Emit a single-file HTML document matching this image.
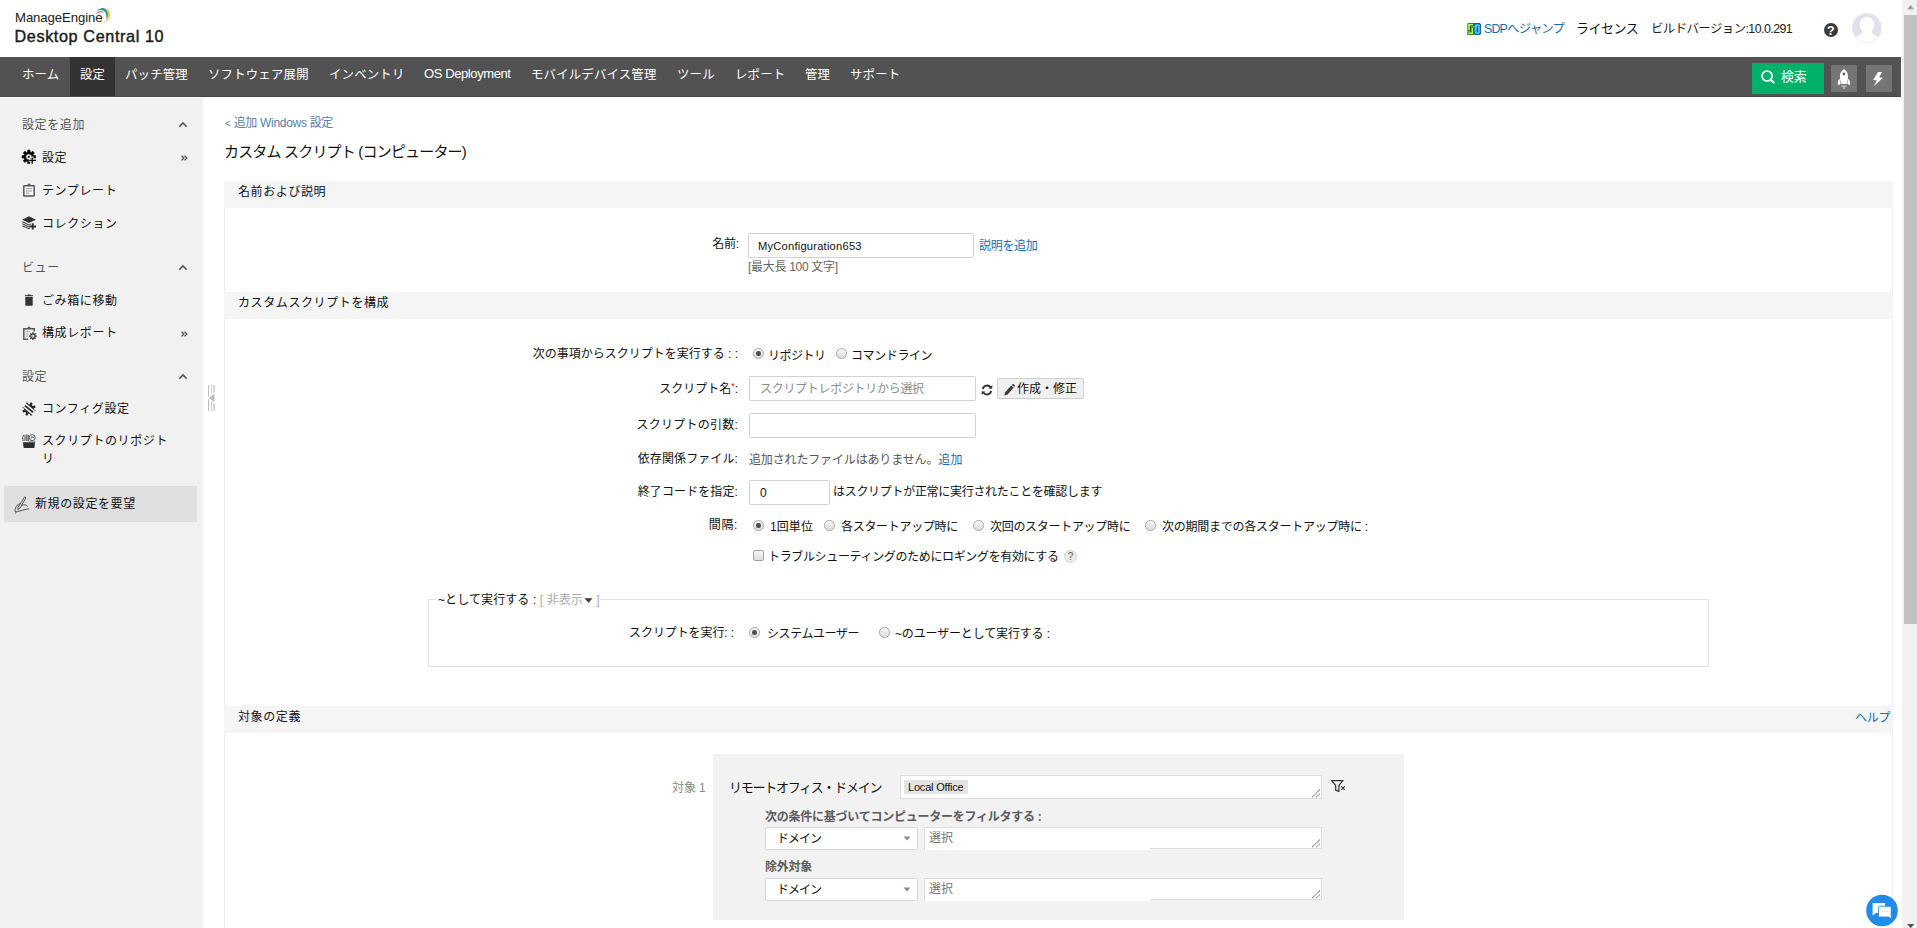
<!DOCTYPE html>
<html lang="ja">
<head>
<meta charset="utf-8">
<title>Desktop Central 10</title>
<style>
*{box-sizing:border-box;margin:0;padding:0}
html,body{width:1917px;height:928px;overflow:hidden;background:#fff}
body{position:relative;font-family:"Liberation Sans","Noto Sans CJK JP",sans-serif;font-size:12px;letter-spacing:0.6px;color:#111;line-height:20px}
.a{position:absolute;white-space:nowrap}
.t{position:absolute;white-space:nowrap;line-height:20px;height:20px}
.r{text-align:right}
.blue{color:#1a6cb0}
.gray{color:#666}
svg{position:absolute;display:block;overflow:visible}
/* header */
#nav{left:0;top:57px;width:1901px;height:40px;background:#525252;border-bottom:1px solid #454545}
#nav .act{left:70px;top:0;width:45px;height:39px;background:#333}
#nav .t{color:#fff;top:8px;font-size:12.4px;letter-spacing:0.2px}
/* sidebar */
#side{left:0;top:98px;width:203px;height:830px;background:#f1f1f1}
.sh{color:#555}
.bar{left:224px;width:1669px;height:27px;background:#f5f5f5}
.inp{position:absolute;background:#fff;border:1px solid #d2d2d2;border-radius:1.5px}
.inp.ta{border-color:#dcdcdc;border-radius:0}
.radio{position:absolute;width:10.4px;height:10.4px;margin:0.3px 0 0 0.3px;border-radius:50%;border:1px solid #a8a8a8;background:linear-gradient(#f6f6f6,#dcdcdc)}
.radio.on::after{content:"";position:absolute;left:2px;top:2px;width:4.4px;height:4.4px;border-radius:50%;background:#505050}
</style>
</head>
<body>
<!--HEADER-->
<div class="a" id="logo1" style="left:15px;top:8px;font-size:13.2px;line-height:20px;color:#222;letter-spacing:-0.1px">ManageEngine</div>
<svg style="left:94px;top:6px" width="18" height="18" viewBox="0 0 18 18">
  <path d="M9.8 2 C14.5 2.5 17 7 15.6 11 C14.6 14 12 16 9.2 16.7 C12 15 13.6 12.6 13.9 10 C14.3 6.5 12.6 3.6 9.8 2Z" fill="#f7c91d"/>
  <path d="M6.5 2.2 C10 1.4 13 3.6 13.7 7 C14.1 9.6 13.5 11.8 12.4 13.2 C12.8 10 12.2 6 9.6 4 C8.6 3.1 7.6 2.6 6.5 2.2Z" fill="#1f7ed0"/>
  <path d="M2.6 4.8 C5 2.4 8.6 2.2 11 4.4 C12 5.4 12.4 6.4 12.6 7.6 C11 5 8.6 3.8 6 4 C4.6 4.1 3.6 4.4 2.6 4.8Z" fill="#1eab5a"/>
  <path d="M1.4 8.2 C3 5.6 6 4.6 8.6 5.4 C9.4 5.7 10 6.1 10.4 6.6 C7.6 5.8 4.4 6.2 1.4 8.2Z" fill="#e8305a"/>
</svg>
<div class="a" id="logo2" style="left:14.5px;top:24px;font-size:16.2px;line-height:24px;color:#1a1a1a;-webkit-text-stroke:0.4px #1a1a1a;letter-spacing:0.62px">Desktop Central 10</div>

<svg id="ic-sdp" style="left:1467px;top:23px" width="14" height="12" viewBox="0 0 14 12">
  <path d="M1.2 0 H7.2 V12 H0.4 V0.8Z" fill="#2f5d06"/>
  <path d="M7 0 H12.8 L14 1.2 V10.8 L12.8 12 H8.2 L7 10.8Z" fill="#0f5f8f"/>
  <path d="M6.2 1.7 H2 V7.2 M5.3 5 V10.4 H1.1" fill="none" stroke="#9aff62" stroke-width="1.7"/>
  <rect x="8.7" y="1.9" width="3.5" height="8" rx="1.5" fill="#1d628d" stroke="#3fc1ff" stroke-width="2"/>
  <path d="M4 3.9 H10.4 M0.2 8.7 H3" stroke="#b9c9b5" stroke-width="0.8"/>
</svg>
<div class="t blue" style="left:1484px;top:19px;font-size:12.4px;letter-spacing:-0.8px">SDPへジャンプ</div>
<div class="t" style="left:1576px;top:19px;font-size:13px;letter-spacing:-0.5px">ライセンス</div>
<div class="t" style="left:1651px;top:19px;font-size:12.4px;letter-spacing:-0.55px;color:#222">ビルドバージョン:10.0.291</div>
<div class="a" style="left:1823.5px;top:23px;width:14.4px;height:14.4px;border-radius:50%;background:#3a3a3a;letter-spacing:0;color:#fff;font-weight:bold;font-size:13px;line-height:15px;text-align:center">?</div>
<svg id="ic-av" style="left:1852px;top:13px" width="30" height="30" viewBox="0 0 30 30">
  <defs><clipPath id="avc"><circle cx="14.9" cy="14.9" r="14.3"/></clipPath></defs>
  <circle cx="14.9" cy="14.9" r="14.6" fill="#dde2ed" stroke="#ececec" stroke-width="0.7"/>
  <g clip-path="url(#avc)" fill="#fff">
    <ellipse cx="14.9" cy="11.5" rx="7.2" ry="7.9"/>
    <path d="M9.8 17 V19.2 C9.8 21.6 5.4 22 3 25.2 L2 31 H28 L26.8 25.2 C24.4 22 20.1 21.6 20.1 19.2 V17Z"/>
  </g>
</svg>

<!--NAV-->
<div class="a" id="nav">
  <div class="a act"></div>
  <span class="t" style="left:22px">ホーム</span>
  <span class="t" style="left:80px">設定</span>
  <span class="t" style="left:125px">パッチ管理</span>
  <span class="t" style="left:208px">ソフトウェア展開</span>
  <span class="t" style="left:329px">インベントリ</span>
  <span class="t" style="left:424px;letter-spacing:-0.4px;font-size:13px;top:7px">OS Deployment</span>
  <span class="t" style="left:531px">モバイルデバイス管理</span>
  <span class="t" style="left:677px">ツール</span>
  <span class="t" style="left:735px">レポート</span>
  <span class="t" style="left:805px">管理</span>
  <span class="t" style="left:850px">サポート</span>
  <div class="a" style="left:1752px;top:6px;width:72px;height:31px;background:#00b16a"></div>
  <svg style="left:1760px;top:12px" width="16" height="16" viewBox="0 0 16 16"><circle cx="7.1" cy="7" r="5" fill="none" stroke="#fff" stroke-width="1.7"/><path d="M10.7 10.7 L13.6 13.6" stroke="#fff" stroke-width="2.1" stroke-linecap="round"/></svg>
  <span class="t" style="left:1781px;top:10px;font-size:12.8px;letter-spacing:0">検索</span>
  <div class="a" style="left:1831px;top:8px;width:26px;height:27px;background:#757575"></div>
  <div class="a" style="left:1866px;top:8px;width:26px;height:27px;background:#757575"></div>
  <svg id="ic-rocket" style="left:1831px;top:8px" width="26" height="27" viewBox="1831 65 26 27">
    <path d="M1843.95 69 C1846.6 70.6 1848.2 73.6 1848 77 C1847.9 80 1847.2 82.4 1846.4 84.1 H1841.5 C1840.7 82.4 1840 80 1839.9 77 C1839.7 73.6 1841.3 70.6 1843.95 69Z" fill="#fff"/>
    <path d="M1839.6 78.8 C1838.2 80 1837.6 82 1837.8 84.6 Q1837.9 85.3 1838.6 85 L1840.8 83.8 C1840.2 82.2 1839.8 80.6 1839.6 78.8Z M1848.3 78.8 C1849.7 80 1850.3 82 1850.1 84.6 Q1850 85.3 1849.3 85 L1847.1 83.8 C1847.7 82.2 1848.1 80.6 1848.3 78.8Z" fill="#fff"/>
    <circle cx="1843.95" cy="73.9" r="1.3" fill="#5a5a5a"/>
    <path d="M1841.2 86.1 H1846.7 M1843.95 86.4 V89.1" stroke="#c8c8c8" stroke-width="1.4" fill="none"/>
  </svg>
  <svg id="ic-bolt" style="left:1866px;top:8px" width="26" height="27" viewBox="1866 65 26 27">
    <path d="M1878 72.1 L1882.1 71.9 L1879.2 77.3 L1882.8 77.9 L1873.4 86.6 L1876.9 80.5 L1873.2 79.9Z" fill="#fff"/>
  </svg>
</div>

<!--SIDE-->
<div class="a" id="side"></div>
<div class="t sh" style="left:22px;top:115px">設定を追加</div>
<div class="t sh" style="left:22px;top:258px">ビュー</div>
<div class="t sh" style="left:22px;top:367px">設定</div>
<svg class="chev" style="left:178px;top:121px" width="10" height="7" viewBox="0 0 10 7"><path d="M1.3 5.8 L5 2 L8.7 5.8" fill="none" stroke="#555" stroke-width="1.6"/></svg>
<svg class="chev" style="left:178px;top:264px" width="10" height="7" viewBox="0 0 10 7"><path d="M1.3 5.8 L5 2 L8.7 5.8" fill="none" stroke="#555" stroke-width="1.6"/></svg>
<svg class="chev" style="left:178px;top:373px" width="10" height="7" viewBox="0 0 10 7"><path d="M1.3 5.8 L5 2 L8.7 5.8" fill="none" stroke="#555" stroke-width="1.6"/></svg>
<div class="t" style="left:42px;top:148px">設定</div>
<div class="t" style="left:42px;top:181px">テンプレート</div>
<div class="t" style="left:42px;top:214px">コレクション</div>
<div class="t" style="left:42px;top:291px">ごみ箱に移動</div>
<div class="t" style="left:42px;top:323px">構成レポート</div>
<div class="t" style="left:42px;top:399px">コンフィグ設定</div>
<div class="t" style="left:42px;top:432px;line-height:18px;height:36px;white-space:normal;width:130px">スクリプトのリポジトリ</div>
<svg style="left:181px;top:155px" width="7" height="6" viewBox="0 0 7 6"><path d="M0.6 0.6 L2.8 3 L0.6 5.4 M3.6 0.6 L5.8 3 L3.6 5.4" fill="none" stroke="#555" stroke-width="1.4"/></svg>
<svg style="left:181px;top:331px" width="7" height="6" viewBox="0 0 7 6"><path d="M0.6 0.6 L2.8 3 L0.6 5.4 M3.6 0.6 L5.8 3 L3.6 5.4" fill="none" stroke="#555" stroke-width="1.4"/></svg>
<div class="a" style="left:4px;top:486px;width:193px;height:36px;background:#e0e0e0"></div>
<div class="t" style="left:35px;top:494px">新規の設定を要望</div>
<!-- icons -->
<svg id="ic-gear" style="left:22px;top:150px" width="14" height="14" viewBox="0 0 14 14">
  <path d="M5.49 1.87 L5.56 0.01 L8.04 0.01 L8.11 1.87 L9.36 2.39 L10.72 1.12 L12.48 2.88 L11.21 4.24 L11.73 5.49 L13.59 5.56 L13.59 8.04 L11.73 8.11 L11.21 9.36 L12.48 10.72 L10.72 12.48 L9.36 11.21 L8.11 11.73 L8.04 13.59 L5.56 13.59 L5.49 11.73 L4.24 11.21 L2.88 12.48 L1.12 10.72 L2.39 9.36 L1.87 8.11 L0.01 8.04 L0.01 5.56 L1.87 5.49 L2.39 4.24 L1.12 2.88 L2.88 1.12 L4.24 2.39Z M6.8 3.9 A2.9 2.9 0 1 0 6.8 9.7 A2.9 2.9 0 1 0 6.8 3.9Z" fill="#0a0a0a" fill-rule="evenodd" stroke="#0a0a0a" stroke-width="0.5" stroke-linejoin="round"/>
  <circle cx="6.8" cy="6.8" r="1.1" fill="#0a0a0a"/>
  <path d="M10.2 6.6 V14.2 M6.8 10.3 H14.2" stroke="#f1f1f1" stroke-width="2.7"/>
  <path d="M10.2 7.4 V13.8 M7.2 10.3 H14" stroke="#0a0a0a" stroke-width="1.3"/>
</svg>
<svg id="ic-tpl" style="left:23px;top:183px" width="12" height="14" viewBox="0 0 12 14">
  <rect x="0.8" y="2.7" width="10.4" height="10.4" rx="0.6" fill="#fafafa" stroke="#555" stroke-width="1.5"/>
  <path d="M3.6 2.6 L6 0.2 L8.4 2.6Z" fill="#555"/>
  <path d="M2.8 5.6 H9 M2.8 8 H9 M2.8 10.2 H6.4" stroke="#8a8a8a" stroke-width="0.9"/>
</svg>
<svg id="ic-col" style="left:22px;top:216px" width="14" height="14" viewBox="0 0 14 14">
  <path d="M7 0.3 L13.8 3.7 L7 7 L0.2 3.7Z" fill="#333"/>
  <path d="M0.4 5.8 L7 9 L9.2 7.9 M0.4 7.8 L7 11 L8.2 10.4 M0.4 9.8 L7 12.8 L8 12.4" fill="none" stroke="#444" stroke-width="1.05"/>
  <path d="M10.8 7.2 V13.6 M7.6 10.4 H14" stroke="#333" stroke-width="2"/>
</svg>
<svg id="ic-trash" style="left:24px;top:294px" width="10" height="12" viewBox="0 0 10 12">
  <path d="M0.9 1.3 H3.2 L3.7 0.4 H6.3 L6.8 1.3 H9.1 V2.2 H0.9Z" fill="#333"/>
  <path d="M1.3 3 H8.7 V10.9 Q8.7 11.7 7.9 11.7 H2.1 Q1.3 11.7 1.3 10.9Z" fill="#333"/>
</svg>
<svg id="ic-rep" style="left:23px;top:326px" width="14" height="14" viewBox="0 0 14 14">
  <path d="M0.8 13.2 V2.7 H11.2 V5.6" fill="none" stroke="#555" stroke-width="1.5"/>
  <path d="M0.1 13.2 H5.2" stroke="#555" stroke-width="1.4"/>
  <path d="M3.6 2.6 L6 0.2 L8.4 2.6Z" fill="#555"/>
  <path d="M2.8 5.6 H7 M2.8 8 H5.4 M2.8 10.2 H5" stroke="#999" stroke-width="0.9"/>
  <path d="M9.19 7.50 L9.29 6.25 L10.51 6.25 L10.61 7.50 L11.24 7.75 L12.19 6.94 L13.06 7.81 L12.25 8.76 L12.50 9.39 L13.75 9.49 L13.75 10.71 L12.50 10.81 L12.25 11.44 L13.06 12.39 L12.19 13.26 L11.24 12.45 L10.61 12.70 L10.51 13.95 L9.29 13.95 L9.19 12.70 L8.56 12.45 L7.61 13.26 L6.74 12.39 L7.55 11.44 L7.30 10.81 L6.05 10.71 L6.05 9.49 L7.30 9.39 L7.55 8.76 L6.74 7.81 L7.61 6.94 L8.56 7.75Z M9.9 8.5 A1.6 1.6 0 1 0 9.9 11.7 A1.6 1.6 0 1 0 9.9 8.5Z" fill="#333" fill-rule="evenodd"/>
  <circle cx="9.9" cy="10.1" r="0.6" fill="#555"/>
</svg>
<svg id="ic-cfg" style="left:22px;top:402px" width="14" height="14" viewBox="0 0 14 14">
  <path d="M7.60 2.24 L8.61 0.29 L10.61 1.12 L9.94 3.21 L10.79 4.06 L12.88 3.39 L13.71 5.39 L11.76 6.40 L11.76 7.60 L13.71 8.61 L12.88 10.61 L10.79 9.94 L9.94 10.79 L10.61 12.88 L8.61 13.71 L7.60 11.76 L6.40 11.76 L5.39 13.71 L3.39 12.88 L4.06 10.79 L3.21 9.94 L1.12 10.61 L0.29 8.61 L2.24 7.60 L2.24 6.40 L0.29 5.39 L1.12 3.39 L3.21 4.06 L4.06 3.21 L3.39 1.12 L5.39 0.29 L6.40 2.24Z" fill="#2a2a2a"/>
  <path d="M1.2 2.2 L12.8 11.8" stroke="#f1f1f1" stroke-width="4.8"/>
  <path d="M2.9 3.6 L11.1 10.4" stroke="#2a2a2a" stroke-width="1.7"/>
</svg>
<svg id="ic-scr" style="left:22px;top:433px" width="14" height="15" viewBox="0 0 14 15">
  <path d="M1 9.2 H13 L12.5 14.2 Q12.4 14.9 11.7 14.9 H2.3 Q1.6 14.9 1.5 14.2Z" fill="#2e2e2e"/>
  <path d="M1.2 8.2 C0.4 6 0.6 3.4 1.6 2.2 M3 8 V1.8 M4.8 8 V1.4 M6.2 8.2 V1.8" stroke="#444" stroke-width="1" fill="none"/>
  <circle cx="10.2" cy="4.6" r="3" fill="#fafafa" stroke="#555" stroke-width="1"/>
  <path d="M8.6 5.6 L10.4 4.4 H12.2 M10.4 4.4 L9.6 3" stroke="#555" stroke-width="0.9" fill="none"/>
  <path d="M7 8.2 H13.4" stroke="#666" stroke-width="0.8"/>
</svg>
<svg id="ic-req" style="left:14px;top:496px" width="16" height="18" viewBox="0 0 16 18">
  <path d="M10.6 0.8 L12 1.8 L5.6 12.6 L3.8 13.6 L4 11.6Z" fill="none" stroke="#444" stroke-width="0.9"/>
  <path d="M1 15.6 C0.6 12 3 8.4 6.4 7.4 M1 15.6 C4 16.4 8 13.6 15.2 12.8 M7.6 9.6 C9.6 8.2 12.4 8.6 13.6 10.4 M2.4 16.6 L1 17.4" fill="none" stroke="#444" stroke-width="0.9"/>
</svg>
<!-- collapse handle -->
<div class="a" style="left:208px;top:385px;width:1px;height:26px;background:#bdbdbd"></div>
<div class="a" style="left:211px;top:385px;width:1px;height:26px;background:#cfcfcf"></div>
<div class="a" style="left:213px;top:385px;width:2px;height:26px;background:#d6d6d6"></div>
<svg style="left:207px;top:392px" width="9" height="12" viewBox="0 0 9 12"><path d="M8 0.4 L1 6 L8 11.6Z" fill="#bdbdbd" stroke="#fff" stroke-width="1.2"/></svg>
<!--MAIN-->
<div class="a" style="left:224px;top:207px;width:1px;height:721px;background:#ebebeb"></div>
<div class="a" style="left:1892px;top:208px;width:1px;height:720px;background:#ebebeb"></div>
<div class="t" style="left:225px;top:113px;color:#5a7ea8;font-size:12px;letter-spacing:-0.3px"><span style="font-size:10px;letter-spacing:0">&lt; </span>追加 Windows 設定</div>
<div class="t" style="left:224px;top:141px;font-size:15px;letter-spacing:-0.82px;color:#111;line-height:22px;height:22px">カスタム スクリプト (コンピューター)</div>

<div class="a bar" style="top:181px"></div>
<div class="t" style="left:238px;top:182px">名前および説明</div>
<div class="t r" style="left:600px;width:139px;top:234px;letter-spacing:-0.2px">名前:</div>
<div class="inp" style="left:748px;top:233px;width:226px;height:25px"></div>
<div class="t" style="left:758px;top:236px;font-size:11.2px;letter-spacing:0.2px">MyConfiguration653</div>
<div class="t blue" style="left:979px;top:236px;font-size:12px;letter-spacing:-0.3px">説明を追加</div>
<div class="t gray" style="left:748px;top:257px;font-size:12px;letter-spacing:-0.3px">[最大長 100 文字]</div>

<div class="a bar" style="top:292px"></div>
<div class="t" style="left:238px;top:293px">カスタムスクリプトを構成</div>

<div class="t r" style="left:500px;width:238px;top:344px;letter-spacing:0">次の事項からスクリプトを実行する : :</div>
<div class="radio on" style="left:753px;top:348px"></div>
<div class="t" style="left:768px;top:346px;letter-spacing:-0.5px">リポジトリ</div>
<div class="radio" style="left:836px;top:348px"></div>
<div class="t" style="left:851px;top:346px;letter-spacing:-0.4px">コマンドライン</div>

<div class="t r" style="left:500px;width:238px;top:379px;letter-spacing:0">スクリプト名<span style="color:#e00;font-size:9px;position:relative;top:-4px">*</span>:</div>
<div class="inp" style="left:749px;top:376px;width:227px;height:25px"></div>
<div class="t" style="left:760px;top:379px;color:#8c8c8c;letter-spacing:-0.3px">スクリプトレポジトリから選択</div>
<svg id="ic-refresh" style="left:980.5px;top:384px;transform:scaleX(-1)" width="12" height="12" viewBox="0 0 12 12">
  <path d="M10.2 5.2 A4.3 4.3 0 0 0 2.4 3.4" fill="none" stroke="#333" stroke-width="1.8"/>
  <path d="M1.8 6.8 A4.3 4.3 0 0 0 9.6 8.6" fill="none" stroke="#333" stroke-width="1.8"/>
  <path d="M0.6 1 L0.8 4.8 L4.4 4.4Z M11.4 11 L11.2 7.2 L7.6 7.6Z" fill="#333"/>
</svg>
<div class="a" style="left:997px;top:378px;width:87px;height:21px;background:#f0f0f0;border:1px solid #cfcfcf;border-radius:2px"></div>
<svg id="ic-pencil" style="left:1004px;top:384px" width="11" height="12" viewBox="0 0 11 12"><path d="M0.3 11.6 L1.2 8.2 L7.2 1.6 L9.6 3.8 L3.6 10.4Z" fill="#3a3a3a"/><path d="M7.9 0.9 L8.7 0.1 Q9.2 -0.2 9.7 0.2 L10.8 1.3 Q11.1 1.8 10.7 2.3 L10.2 3Z" fill="#3a3a3a"/></svg>
<div class="t" style="left:1017px;top:379px;letter-spacing:0">作成・修正</div>

<div class="t r" style="left:500px;width:238px;top:415px;letter-spacing:0.25px">スクリプトの引数:</div>
<div class="inp" style="left:749px;top:413px;width:227px;height:25px"></div>

<div class="t r" style="left:500px;width:238px;top:449px;letter-spacing:0.1px">依存関係ファイル:</div>
<div class="t" style="left:749px;top:450px;color:#555;letter-spacing:-0.15px">追加されたファイルはありません。<span class="blue" style="letter-spacing:0.3px">追加</span></div>

<div class="t r" style="left:500px;width:238px;top:482px;letter-spacing:0.1px">終了コードを指定:</div>
<div class="inp" style="left:749px;top:480px;width:81px;height:25px"></div>
<div class="t" style="left:760px;top:483px;font-size:12px">0</div>
<div class="t" style="left:833px;top:482px;letter-spacing:-0.3px">はスクリプトが正常に実行されたことを確認します</div>

<div class="t r" style="left:500px;width:238px;top:515px">間隔:</div>
<div class="radio on" style="left:753px;top:520px"></div>
<div class="t" style="left:770px;top:517px;letter-spacing:0.1px">1回単位</div>
<div class="radio" style="left:824px;top:520px"></div>
<div class="t" style="left:841px;top:517px;letter-spacing:-0.3px">各スタートアップ時に</div>
<div class="radio" style="left:973px;top:520px"></div>
<div class="t" style="left:990px;top:517px;letter-spacing:-0.3px">次回のスタートアップ時に</div>
<div class="radio" style="left:1145px;top:520px"></div>
<div class="t" style="left:1162px;top:517px;letter-spacing:-0.25px">次の期間までの各スタートアップ時に :</div>

<div class="a" style="left:753px;top:550px;width:10.5px;height:10.5px;border:1px solid #a2a2a2;background:linear-gradient(#f8f8f8,#dedede);border-radius:2px"></div>
<div class="t" style="left:768px;top:547px;letter-spacing:-0.35px">トラブルシューティングのためにロギングを有効にする</div>
<div class="a" style="left:1064px;top:550px;width:13px;height:13px;border-radius:50%;background:#ececec;border:1px solid #d4d4d4;color:#666;font-size:10px;line-height:11px;text-align:center;letter-spacing:0">?</div>

<div class="a" style="left:428px;top:599px;width:1281px;height:68px;border:1px solid #e2e2e2"></div>
<div class="a" style="left:436px;top:590px;width:164px;height:18px;background:#fff"></div>
<div class="t" style="left:438px;top:590px;letter-spacing:0.1px">~として実行する : <span style="color:#aaa">[ 非表示<svg style="position:relative;display:inline-block;vertical-align:middle;margin:0 0 0 1px;top:0" width="9" height="5" viewBox="0 0 8 5"><path d="M0 0.3 H8 L4 4.8Z" fill="#4a2f2f"/></svg> ]</span></div>

<div class="t r" style="left:500px;width:234px;top:623px;letter-spacing:-0.1px">スクリプトを実行: :</div>
<div class="radio on" style="left:749px;top:627px"></div>
<div class="t" style="left:767px;top:624px;letter-spacing:-0.4px">システムユーザー</div>
<div class="radio" style="left:879px;top:627px"></div>
<div class="t" style="left:895px;top:624px;letter-spacing:-0.15px">~のユーザーとして実行する :</div>

<div class="a bar" style="top:706px"></div>
<div class="t" style="left:238px;top:707px">対象の定義</div>
<div class="t blue" style="left:1855px;top:708px;letter-spacing:-0.3px">ヘルプ</div>

<div class="a" style="left:713px;top:754px;width:691px;height:166px;background:#f2f2f2"></div>
<div class="t" style="left:672px;top:778px;color:#888;letter-spacing:-0.1px">対象 1</div>
<div class="t" style="left:729px;top:778px;font-size:13px;letter-spacing:-1.27px">リモートオフィス・ドメイン</div>
<div class="inp ta" style="left:900px;top:775px;width:422px;height:24px"></div>
<div class="a" style="left:904px;top:780px;width:64px;height:14px;background:#e4e4e4"></div>
<div class="t" style="left:908px;top:777px;font-size:11px;letter-spacing:-0.2px">Local Office</div>
<svg class="rs" style="left:1311px;top:788px" width="10" height="10" viewBox="0 0 10 10"><path d="M1.2 9 L9 1.6 M5.4 9 L9 5.6" stroke="#333" stroke-width="1" stroke-dasharray="1.1 0.5"/></svg>
<svg id="ic-filter" style="left:1330px;top:779px" width="17" height="14" viewBox="1330 779 17 14">
  <path d="M1331.5 780.7 H1343 L1338.9 785.3 V791.5 L1335.7 790.1 V785.3Z" fill="none" stroke="#333" stroke-width="1.25" stroke-linejoin="round"/>
  <path d="M1341.3 786.4 L1344.7 789.8 M1344.7 786.4 L1341.3 789.8" stroke="#333" stroke-width="1.1"/>
</svg>

<div class="t" style="left:765px;top:807px;font-weight:bold;color:#5c5c5c;letter-spacing:-0.25px">次の条件に基づいてコンピューターをフィルタする :</div>
<div class="inp" style="left:765px;top:827px;width:153px;height:23px;border-color:#d8d8d8"></div>
<div class="t" style="left:777px;top:829px;letter-spacing:-1px">ドメイン</div>
<svg style="left:903px;top:836px" width="8" height="5" viewBox="0 0 8 5"><path d="M0.6 0.6 H7.4 L4 4.4Z" fill="#888"/></svg>
<div class="inp ta" style="left:924px;top:827px;width:398px;height:22px"></div>
<div class="a" style="left:924px;top:848px;width:226px;height:2px;background:#fff;border-left:1px solid #dcdcdc"></div>
<div class="t" style="left:929px;top:828px;color:#777;letter-spacing:0">選択</div>
<svg class="rs" style="left:1311px;top:838px" width="10" height="10" viewBox="0 0 10 10"><path d="M1.2 9 L9 1.6 M5.4 9 L9 5.6" stroke="#333" stroke-width="1" stroke-dasharray="1.1 0.5"/></svg>

<div class="t" style="left:765px;top:857px;font-weight:bold;color:#5c5c5c;letter-spacing:-0.25px">除外対象</div>
<div class="inp" style="left:765px;top:878px;width:153px;height:23px;border-color:#d8d8d8"></div>
<div class="t" style="left:777px;top:880px;letter-spacing:-1px">ドメイン</div>
<svg style="left:903px;top:887px" width="8" height="5" viewBox="0 0 8 5"><path d="M0.6 0.6 H7.4 L4 4.4Z" fill="#888"/></svg>
<div class="inp ta" style="left:924px;top:878px;width:398px;height:22px"></div>
<div class="a" style="left:924px;top:899px;width:226px;height:2px;background:#fff;border-left:1px solid #dcdcdc"></div>
<div class="t" style="left:929px;top:879px;color:#777;letter-spacing:0">選択</div>
<svg class="rs" style="left:1311px;top:889px" width="10" height="10" viewBox="0 0 10 10"><path d="M1.2 9 L9 1.6 M5.4 9 L9 5.6" stroke="#333" stroke-width="1" stroke-dasharray="1.1 0.5"/></svg>

<!-- chat bubble -->
<svg id="ic-chat" style="left:1864px;top:893px" width="36" height="35" viewBox="1864 893 36 35">
  <circle cx="1882" cy="910.5" r="15.8" fill="#228be6"/>
  <path d="M1872.6 902.9 H1884.6 Q1885 902.9 1885 903.3 V913 H1876.2 L1872.6 915.4Z" fill="#fff"/>
  <path d="M1879.6 906.2 H1891.2 V919.2 L1888.6 917 H1879.6 Q1878.4 917 1878.4 915.8 V907.4 Q1878.4 906.2 1879.6 906.2Z" fill="#fff" stroke="#228be6" stroke-width="0.9"/>
  <path d="M1882 911.6 h1 M1884.5 911.6 h1 M1887 911.6 h1" stroke="#a9d0f7" stroke-width="1"/>
</svg>
<!--SCROLL-->
<div class="a" style="left:1902px;top:0;width:15px;height:928px;background:#f1f1f1"></div>
<div class="a" style="left:1904px;top:15px;width:13px;height:609px;background:#c1c1c1"></div>
<svg style="left:1906.9px;top:4.8px" width="7.3" height="4.2" viewBox="0 0 8 5"><path d="M0 5 L4 0 L8 5Z" fill="#9c9c9c"/></svg>
<svg style="left:1906.8px;top:924px" width="7.4" height="4.6" viewBox="0 0 8 5"><path d="M0 0 L4 4.4 L8 0Z" fill="#505050"/></svg>
</body>
</html>
